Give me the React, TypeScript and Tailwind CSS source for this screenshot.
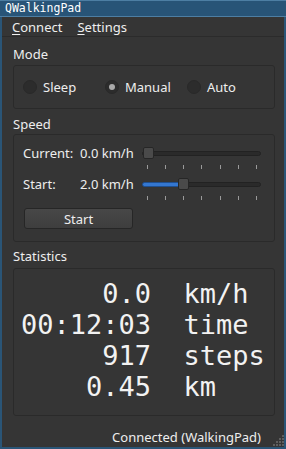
import React from "react";

// QWalkingPad main window, dark Fusion-like palette

const ui = { fontFamily: '"Noto Sans", "Open Sans", sans-serif' };
const mono = { fontFamily: '"DejaVu Sans Mono", "Liberation Mono", monospace' };

interface SliderProps {
  handle: number; // px offset of the handle
  filled?: boolean;
}

function Slider({ handle, filled }: SliderProps) {
  return (
    <div className="relative w-[120px] h-[12px]">
      {/* groove */}
      <div className="absolute left-0 right-[1px] top-[4px] h-[5px] rounded-[3px] bg-[#2a2a2a] border border-[#222222]" />
      {filled && (
        <div
          className="absolute left-0 top-[4px] h-[5px] rounded-l-[3px] bg-[#3477d0] border border-[#1f4f8f]"
          style={{ width: handle + 2 }}
        />
      )}
      {/* handle */}
      <div
        className="absolute top-0 w-[11px] h-[12px] rounded-[2px] bg-[#4a4a4a] border border-[#262626]"
        style={{ left: handle }}
      />
    </div>
  );
}

function Ticks() {
  return (
    <div className="w-[120px] h-[4px] flex justify-between px-[5px]">
      {Array.from({ length: 7 }).map((_, i) => (
        <div key={i} className="w-px h-[4px] bg-[#9a9a9a]" />
      ))}
    </div>
  );
}

function Radio({ label, checked }: { label: string; checked?: boolean }) {
  return (
    <div className="w-[82px] flex items-center gap-[6px]">
      <div className="w-[14px] h-[14px] rounded-full bg-[#2c2c2c] border border-[#292929] flex items-center justify-center">
        {checked && <div className="w-[6px] h-[6px] rounded-full bg-[#a9a9a9]" />}
      </div>
      <span className="text-[13px] leading-[18px] text-[#eeeeee]">{label}</span>
    </div>
  );
}

const stats = [
  { value: "0.0", unit: "km/h" },
  { value: "00:12:03", unit: "time" },
  { value: "917", unit: "steps" },
  { value: "0.45", unit: "km" },
];

export default function App() {
  return (
    <div className="w-[286px] h-[449px] bg-[#2a5577] flex flex-col overflow-hidden" style={ui}>
      {/* title bar */}
      <div className="h-[17px] border-t border-b border-[#4d7ea3] bg-[#285477] flex items-center pl-[5px]">
        <span className="text-[11.5px] leading-[15px] text-white" style={mono}>
          QWalkingPad
        </span>
      </div>

      <div className="flex-1 flex flex-col bg-[#353535] ml-[2px] mr-[2px] mb-[2px]">
        {/* menu bar */}
        <div className="h-[20px] border-b border-[#2b2b2b] flex items-center pl-[10px] gap-[15px] text-[13px] leading-[18px] text-[#eeeeee]">
          <span>
            <span className="underline underline-offset-2">C</span>onnect
          </span>
          <span>
            <span className="underline underline-offset-2">S</span>ettings
          </span>
        </div>

        <div className="flex flex-col pl-[11px] pr-[9px] text-[#eeeeee]">
          {/* Mode */}
          <div className="mt-[8px] h-[18px] text-[13px] leading-[18px]">Mode</div>
          <div className="mt-[2px] h-[44px] rounded-[3px] border border-[#2a2a2a] flex items-center pl-[9px]">
            <Radio label="Sleep" />
            <Radio label="Manual" checked />
            <Radio label="Auto" />
          </div>

          {/* Speed */}
          <div className="mt-[6px] h-[18px] text-[13px] leading-[18px]">Speed</div>
          <div className="mt-[1px] h-[108px] rounded-[3px] border border-[#2a2a2a] flex flex-col pl-[9px] pt-[12px] text-[13px]">
            <div className="flex items-center h-[12px]">
              <span className="w-[57px] leading-[18px]">Current:</span>
              <span className="w-[62px] leading-[18px]">0.0 km/h</span>
              <Slider handle={1} />
            </div>
            <div className="flex mt-[6px]">
              <div className="w-[119px]" />
              <Ticks />
            </div>
            <div className="flex items-center h-[12px] mt-[9px]">
              <span className="w-[57px] leading-[18px]">Start:</span>
              <span className="w-[62px] leading-[18px]">2.0 km/h</span>
              <Slider handle={36} filled />
            </div>
            <div className="flex mt-[6px]">
              <div className="w-[119px]" />
              <Ticks />
            </div>
            <button className="mt-[8px] ml-[1px] w-[109px] h-[21px] rounded-[3px] border border-[#262626] bg-gradient-to-b from-[#474747] to-[#3e3e3e] text-[13px] leading-[18px] text-[#eeeeee]">
              Start
            </button>
          </div>

          {/* Statistics */}
          <div className="mt-[5px] h-[18px] text-[13px] leading-[18px]">Statistics</div>
          <div className="mt-[3px] h-[148px] rounded-[3px] border border-[#2a2a2a] pl-[7px] pt-[9px]">
            {stats.map((s) => (
              <div key={s.unit} className="whitespace-pre text-[27px] leading-[31px] text-[#f2f2f2]" style={mono}>
                {s.value.padStart(8) + "  " + s.unit}
              </div>
            ))}
          </div>
        </div>

        {/* status bar */}
        <div className="flex-1 flex items-end justify-end">
          <span className="text-[13px] leading-[18px] text-[#eeeeee] mb-[1px]">Connected (WalkingPad)</span>
          <svg width="12" height="12" viewBox="0 0 12 12" className="ml-[11px] mb-[1px]">
            {[
              [10, 1],
              [7, 4],
              [10, 4],
              [4, 7],
              [7, 7],
              [10, 7],
              [1, 10],
              [4, 10],
              [7, 10],
              [10, 10],
            ].map(([x, y], i) => (
              <rect key={i} x={x} y={y} width="2" height="2" fill="#5e5e5e" />
            ))}
          </svg>
        </div>
      </div>
    </div>
  );
}
